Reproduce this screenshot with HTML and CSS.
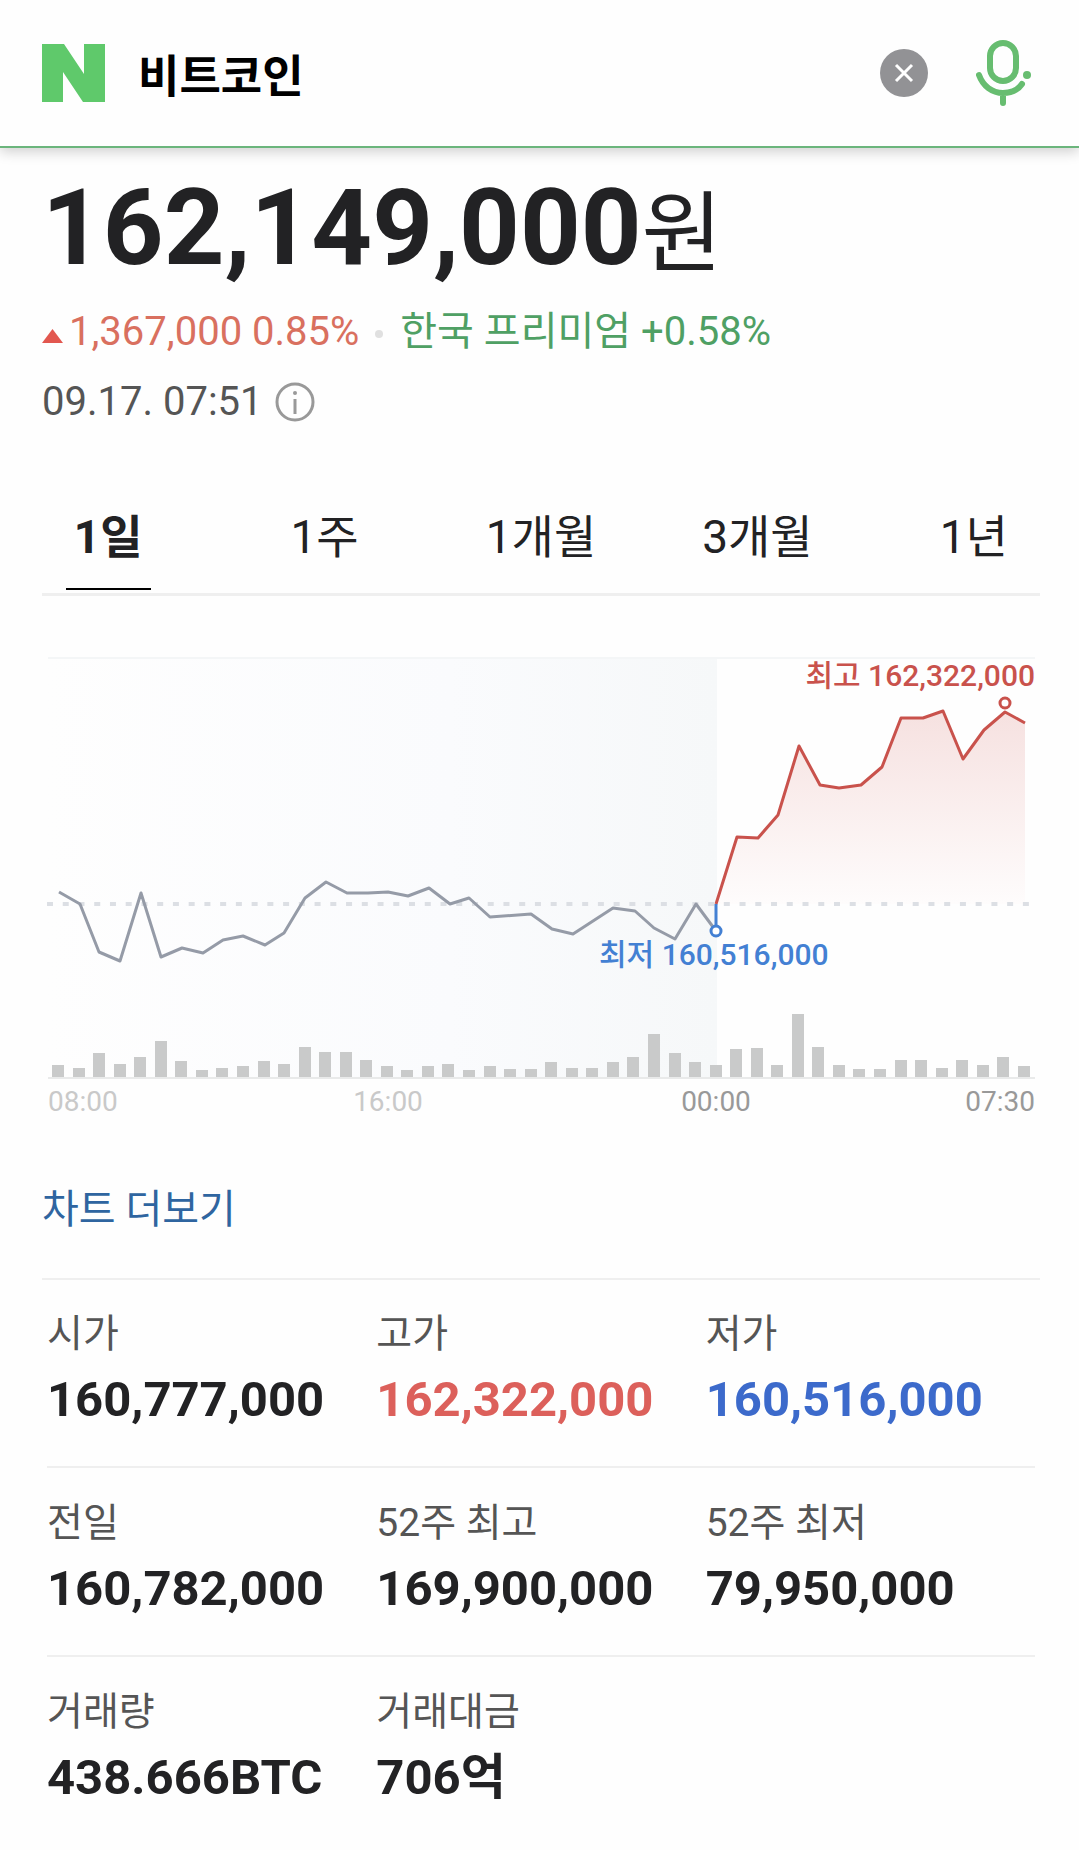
FILE: index.html
```html
<!DOCTYPE html>
<html lang="ko">
<head>
  <meta charset="UTF-8">
  <meta name="viewport" content="width=device-width, initial-scale=1.0">
  <title>비트코인</title>
  <link rel="stylesheet" href="styles.css">
</head>
<body>
  <header>
    <form class="search">
      <a href="#" class="logo" aria-label="홈">
        <svg width="63" height="58" viewBox="0 0 63 58"><path d="M0 0H22L42 30V0H63V58H41L21 28V58H0Z" fill="#5fc96b"/></svg>
      </a>
      <input type="text" class="search-input" value="비트코인" aria-label="검색어">
      <button type="reset" class="icon-btn clear-btn" aria-label="지우기">
        <svg width="48" height="48" viewBox="0 0 48 48">
          <circle cx="24" cy="24" r="24" fill="#929295"/>
          <path d="M16 16L32 32M32 16L16 32" stroke="#fff" stroke-width="3"/>
        </svg>
      </button>
      <button type="button" class="icon-btn" aria-label="음성 검색">
        <svg width="56" height="66" viewBox="0 0 56 66" fill="none" stroke="#67bd70" stroke-width="6" stroke-linecap="round">
          <rect x="14" y="3" width="26" height="38" rx="13"/>
          <path d="M3 35C7 46 16 53 27 53C35 53 42 50 46 44M27 54V63"/>
          <circle cx="51" cy="35" r="4" fill="#67bd70" stroke="none"/>
        </svg>
      </button>
    </form>
  </header>

  <main>
    <section class="summary">
      <h1 class="price">162,149,000<span class="won">원</span></h1>
      <div class="change">
        <svg class="arrow" width="21" height="14" viewBox="0 0 21 14"><path d="M10.500 0L21 14H0Z" fill="#e2574f"/></svg>
        <span class="up">1,367,000 0.85%</span>
        <span class="dot"></span>
        <span class="premium">한국 프리미엄 +0.58%</span>
      </div>
      <div class="date">
        <span>09.17. 07:51</span>
        <button type="button" class="icon-btn" aria-label="안내">
          <svg width="40" height="40" viewBox="0 0 40 40" fill="none" stroke="#999" stroke-width="3">
            <circle cx="20" cy="20" r="18"/>
            <path d="M20 17V32"/>
            <circle cx="20" cy="11" r="2" fill="#999" stroke="none"/>
          </svg>
        </button>
      </div>
    </section>

    <nav class="tabs">
      <ul>
        <li><a href="#" class="active" aria-current="true">1일</a></li>
        <li><a href="#">1주</a></li>
        <li><a href="#">1개월</a></li>
        <li><a href="#">3개월</a></li>
        <li><a href="#">1년</a></li>
      </ul>
    </nav>

    <svg class="chart" viewBox="0 0 997 480" role="img" aria-label="1일 시세 차트">
      <defs>
        <linearGradient id="prevDay" x1="0" x2="1" y1="0" y2="0">
          <stop offset="0" stop-color="#fefefe"/>
          <stop offset="0.6" stop-color="#fafbfd"/>
          <stop offset="1" stop-color="#f6f8f9"/>
        </linearGradient>
        <linearGradient id="rise" x1="0" x2="0" y1="0" y2="1">
          <stop offset="0" stop-color="#f6e1e0"/>
          <stop offset="1" stop-color="#fefcfc"/>
        </linearGradient>
      </defs>

      <rect x="4" y="17" width="670" height="420" fill="url(#prevDay)"/>
      <path d="M5 18H992" stroke="#f4f6f7" stroke-width="2"/>
      <path d="M5 438H992" stroke="#e9eaea" stroke-width="2"/>

      <!-- volume -->
      <path class="bars" d="M15 437v-12M36 437v-9M56 437v-24M77 437v-13M97 437v-20M118 437v-36M138 437v-16M159 437v-7M179 437v-9M200 437v-11M221 437v-16M241 437v-13M262 437v-30M282 437v-25M303 437v-25M323 437v-17
        M344 437v-11M364 437v-7M385 437v-11M405 437v-13M426 437v-7M447 437v-11M467 437v-8M488 437v-8M508 437v-15M529 437v-9M549 437v-9M570 437v-15M590 437v-20M611 437v-43M632 437v-24M652 437v-15
        M673 437v-12M693 437v-28M714 437v-29M734 437v-12M755 437v-63M775 437v-30M796 437v-12M816 437v-8M837 437v-8M858 437v-17M878 437v-17M899 437v-9M919 437v-17M940 437v-12M960 437v-20M981 437v-11"/>

      <!-- price -->
      <path d="M673 264L694 197L715 198L735 175L756 106L777 145L796 148L818 145L839 127L858 78L880 78L900 71L920 119L941 90L962 72L982 83V264Z" fill="url(#rise)"/>
      <path d="M4 264H987" stroke="#dcdfe4" stroke-width="4" stroke-dasharray="6 9.74"/>
      <path class="line prev" d="M16 252L37 264L56 312L77 321L98 253L118 317L139 308L160 313L180 300L200 296L222 305L241 293L262 258L283 242L304 253L325 253L345 252L365 256L386 248L407 264L426 258L447 277L488 274L509 289L530 294L570 268L592 271L611 288L632 299L653 264L673 291"/>
      <path class="line high" d="M673 264L694 197L715 198L735 175L756 106L777 145L796 148L818 145L839 127L858 78L880 78L900 71L920 119L941 90L962 72L982 83"/>
      <path class="line low" d="M673 264V286"/>
      <circle class="point high" cx="962" cy="63" r="5"/>
      <circle class="point low" cx="673" cy="291" r="5"/>

      <text class="mark mark-high" x="992" y="46" text-anchor="end">최고 162,322,000</text>
      <text class="mark mark-low" x="556" y="325">최저 160,516,000</text>

      <text class="time past" x="5" y="471">08:00</text>
      <text class="time past" x="345" y="471" text-anchor="middle">16:00</text>
      <text class="time" x="673" y="471" text-anchor="middle">00:00</text>
      <text class="time" x="992" y="471" text-anchor="end">07:30</text>
    </svg>

    <a href="#" class="more">차트 더보기</a>

    <dl class="stats">
      <div class="stats-row">
        <div><dt>시가</dt><dd>160,777,000</dd></div>
        <div><dt>고가</dt><dd class="red">162,322,000</dd></div>
        <div><dt>저가</dt><dd class="blue">160,516,000</dd></div>
      </div>
      <div class="stats-row">
        <div><dt>전일</dt><dd>160,782,000</dd></div>
        <div><dt>52주 최고</dt><dd>169,900,000</dd></div>
        <div><dt>52주 최저</dt><dd>79,950,000</dd></div>
      </div>
      <div class="stats-row">
        <div><dt>거래량</dt><dd>438.666BTC</dd></div>
        <div><dt>거래대금</dt><dd>706억</dd></div>
      </div>
    </dl>
  </main>
</body>
</html>
```
FILE: styles.css
```css
:root {
  --bg: #fefefe;
  --text: #222224;
  --sub: #555;
  --line: #efefef;
  --red: #dc605b;
  --blue: #3c6acb;
  --green: #4fa064;
}

* {
  box-sizing: border-box;
}

body {
  margin: 0;
  font-family: Roboto, "Noto Sans CJK KR", sans-serif;
  background: var(--bg);
  color: var(--text);
}

a {
  color: inherit;
  text-decoration: none;
}

.icon-btn {
  display: flex;
  padding: 0;
  border: none;
  background: none;
  cursor: pointer;
}

header {
  background: var(--bg);
  border-bottom: 2px solid #6bb57c;
  box-shadow: 0 4px 12px rgba(0, 0, 0, 0.18);
}

.search {
  display: flex;
  align-items: center;
  height: 146px;
  padding: 0 47px 0 42px;
}

.logo {
  display: flex;
}

.search-input {
  flex: 1;
  min-width: 0;
  height: 64px;
  margin-left: 33px;
  padding: 0;
  border: none;
  outline: none;
  background: none;
  font-family: inherit;
  font-size: 45px;
  font-weight: 700;
  color: #000;
}

.clear-btn {
  margin-right: 48px;
}

.summary {
  padding: 17px 42px 0;
}

.price {
  margin: 0;
  font-size: 106px;
  line-height: 126px;
  font-weight: 700;
}

.won {
  font-size: 88px;
  font-weight: 400;
}

.change,
.date {
  display: flex;
  align-items: center;
  font-size: 40px;
  line-height: 70px;
}

.arrow {
  margin: 8px 6px 0 0;
}

.up {
  color: #d9705f;
}

.dot {
  width: 8px;
  height: 8px;
  margin: 4px 17px 0 16px;
  border-radius: 50%;
  background: #e0e0e0;
}

.premium {
  color: var(--green);
}

.date {
  gap: 12px;
  color: var(--sub);
}

.tabs {
  margin: 46px 39px 0 42px;
  border-bottom: 3px solid var(--line);
}

.tabs ul {
  display: flex;
  margin: 0 -42px;
  padding: 0;
  list-style: none;
}

.tabs li {
  flex: 1;
  text-align: center;
}

.tabs a {
  display: inline-block;
  min-width: 84px;
  margin-bottom: 3px;
  padding: 24px 8px 21px;
  border-bottom: 2px solid transparent;
  font-size: 46px;
  line-height: 60px;
}

.tabs .active {
  border-color: #000;
  font-weight: 700;
}

.chart {
  display: block;
  width: calc(100% - 82px);
  margin: 44px 39px 0 43px;
}

.bars {
  stroke: #c9caca;
  stroke-width: 12;
}

.line {
  fill: none;
  stroke-width: 3;
  stroke-linejoin: round;
}

.point {
  fill: #fff;
  stroke-width: 3;
}

.prev {
  stroke: #959ba7;
}

.high {
  stroke: #c9524c;
}

.low {
  stroke: #4380d3;
}

.mark {
  font-size: 30px;
  font-weight: 500;
}

.mark-high {
  fill: #c9524c;
}

.mark-low {
  fill: #4380d3;
}

.time {
  font-size: 28px;
  fill: #999;
}

.past {
  fill: #c9c9c9;
}

.more {
  display: inline-block;
  margin: 60px 42px 38px;
  font-size: 40px;
  line-height: 60px;
  color: #2f65a0;
}

.stats {
  margin: 0 39px 0 42px;
  padding: 0 5px;
  border-top: 2px solid var(--line);
}

.stats-row {
  display: grid;
  grid-template-columns: repeat(3, 1fr);
  padding: 24px 0 30px;
}

.stats-row + .stats-row {
  padding-top: 25px;
  border-top: 2px solid var(--line);
}

dt {
  font-size: 39px;
  line-height: 60px;
  color: var(--sub);
}

dd {
  margin: 0;
  font-size: 49px;
  line-height: 72px;
  font-weight: 700;
}

.red {
  color: var(--red);
}

.blue {
  color: var(--blue);
}
```
